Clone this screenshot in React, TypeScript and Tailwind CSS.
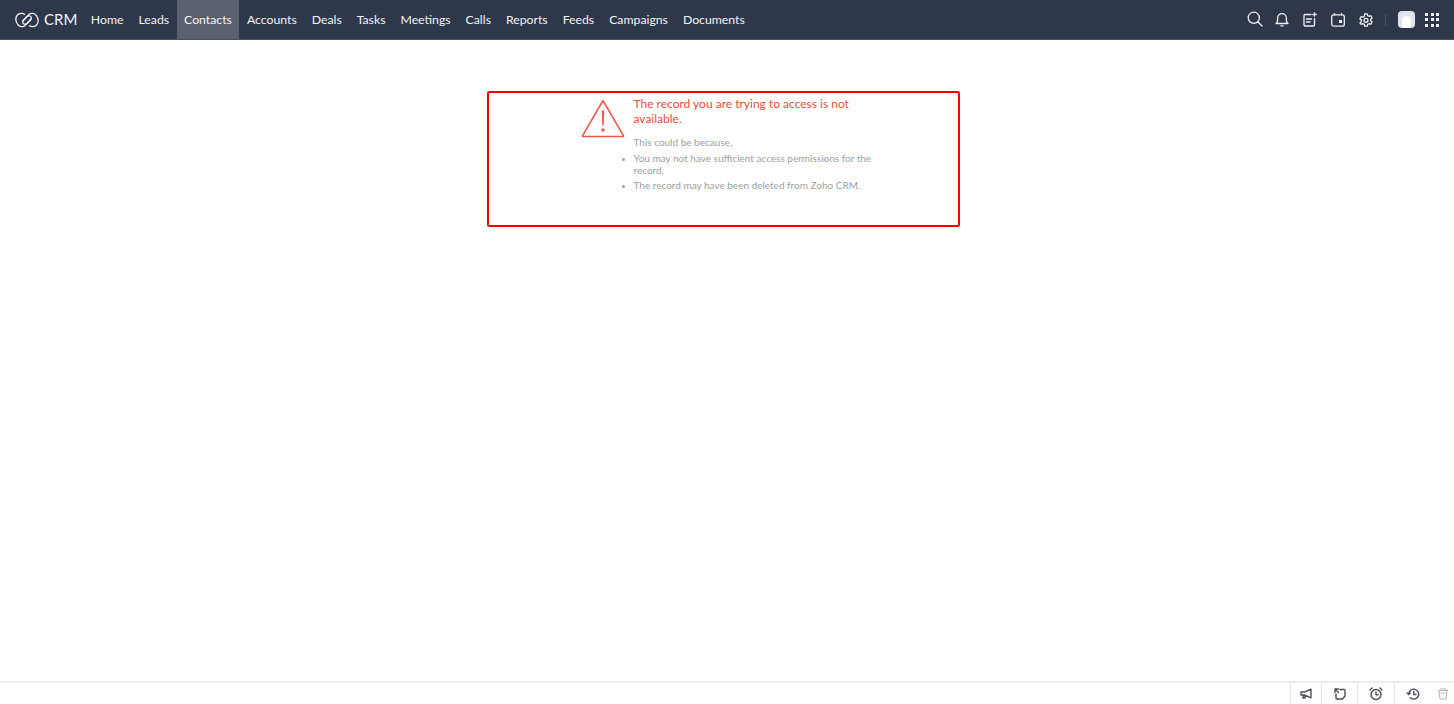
import React from "react";

const tabs = ["Home", "Leads", "Contacts", "Accounts", "Deals", "Tasks", "Meetings", "Calls", "Reports", "Feeds", "Campaigns", "Documents"];

function Logo() {
  return (
    <svg width="24" height="16" viewBox="0 0 24 16" fill="none" stroke="#f2f4f7" strokeWidth="1.3" strokeLinecap="round">
      <path d="M9.500 2.200 C7.600 .9 4.200 1 2.400 3 C.2 5.400 .4 9.600 2.600 12.400 C4.600 14.900 8 15.300 10.200 13.400 L15.600 7.800 C16.800 6.500 16.400 4.600 15 4 C13.800 3.400 12.600 4 11.800 4.800 L7.800 9" />
      <path d="M14.500 13.800 C16.400 15.100 19.800 15 21.600 13 C23.800 10.600 23.600 6.400 21.400 3.600 C19.400 1.100 16 .7 13.800 2.600 L8.400 8.200 C7.200 9.500 7.600 11.400 9 12 C10.200 12.600 11.400 12 12.200 11.200 L16.200 7" />
    </svg>
  );
}

const iconProps = {
  fill: "none",
  stroke: "#eef0f4",
  strokeWidth: 1.3,
  strokeLinecap: "round" as const,
  strokeLinejoin: "round" as const,
};

function TopIcons() {
  return (
    <div className="flex items-center">
      <svg width="16" height="16" viewBox="0 0 16 16" {...iconProps} className="mr-[12px] mb-[2px]">
        <circle cx="6.800" cy="6.800" r="5.600" />
        <path d="M11 11l4 4" />
      </svg>
      <svg width="14" height="15" viewBox="0 0 14 15" {...iconProps} className="mr-[14px]">
        <path d="M1 11.500c1-.8 1.600-1.400 1.600-3V6a4.400 4.400 0 0 1 8.800 0v2.500c0 1.600.6 2.200 1.600 3z" />
        <path d="M5.800 13.800h2.400" />
      </svg>
      <svg width="14" height="15" viewBox="0 0 14 15" {...iconProps} className="mr-[14px]">
        <path d="M8 2.500H2a1 1 0 0 0-1 1V13a1 1 0 0 0 1 1h8.500a1 1 0 0 0 1-1V6.500" />
        <path d="M3.500 7h5M3.500 10h3.500M11.500 .8v3.400M9.800 2.500h3.400" />
      </svg>
      <svg width="14" height="14" viewBox="0 0 14 14" {...iconProps} className="mr-[14px]">
        <rect x=".7" y="1.800" width="12.600" height="11.400" rx="2" />
        <path d="M3.500 .6v1.200M10.500 .6v1.200" />
        <rect x="8" y="7" width="3" height="3" fill="#eef0f4" stroke="none" />
      </svg>
      <svg width="14" height="14" viewBox="0 0 14 14" {...iconProps} className="mr-[12px]">
        <path d="M5.700 .8h2.600l.4 1.800 1.300.7 1.800-.6 1.300 2.300-1.400 1.200v1.600l1.400 1.200-1.300 2.300-1.800-.6-1.300.7-.4 1.800H5.700l-.4-1.800-1.300-.7-1.800.6L.9 9.900l1.400-1.200V7.100L.9 5.900l1.300-2.300 1.800.6 1.300-.7z" />
        <circle cx="7" cy="7.300" r="2" />
      </svg>
      <div className="h-[12px] w-px bg-[#4a5264] mr-[12px]" />
      <div className="w-[17px] h-[17px] rounded-[4px] bg-[#dfe4f0] flex items-end justify-center overflow-hidden mr-[10px]">
        <div className="w-[9px] h-[12px] rounded-t-full bg-white" />
      </div>
      <div className="grid grid-cols-3 gap-[2.500px]">
        {Array.from({ length: 9 }).map((_, i) => (
          <div key={i} className="w-[3px] h-[3px] bg-[#f2f4f7]" />
        ))}
      </div>
    </div>
  );
}

const b = { fill: "none", stroke: "#4b4f57", strokeWidth: 1.4, strokeLinecap: "round" as const, strokeLinejoin: "round" as const };

function BottomBar() {
  return (
    <div className="h-[23px] shrink-0 border-t-2 border-[#eeeeee] bg-white flex justify-end items-stretch">
      <div className="w-[31px] border-l border-[#e4e4e4] flex items-center justify-center">
        <svg width="13" height="12" viewBox="0 0 13 12" {...b}>
          <path d="M1 4h3.500L11 1.200v8.600L4.500 7H1zM3 7v3h2V7.500" />
        </svg>
      </div>
      <div className="w-[36px] border-l border-[#e4e4e4] flex items-center justify-center">
        <svg width="12" height="12" viewBox="0 0 12 12" {...b}>
          <path d="M1 1h3.500M1 1v3.500M1 1l3.500 3.500M6 1.500h4a1 1 0 0 1 1 1V8l-2.500 3H3a1 1 0 0 1-1-1V6" />
        </svg>
      </div>
      <div className="w-[37px] border-l border-[#e4e4e4] flex items-center justify-center">
        <svg width="14" height="14" viewBox="0 0 14 14" {...b}>
          <circle cx="7" cy="7.500" r="5" />
          <path d="M7 5v2.800h2.200M1 3l2-2M13 3l-2-2" />
        </svg>
      </div>
      <div className="w-[38px] border-l border-[#e4e4e4] flex items-center justify-center">
        <svg width="15" height="14" viewBox="0 0 15 14" {...b}>
          <path d="M2.700 7a5 5 0 1 1 1.500 3.700M1 6l1.700 1.400L4.300 6" />
          <path d="M7.700 4.500v3H10" />
        </svg>
      </div>
      <div className="w-[22px] flex items-center justify-center">
        <svg width="12" height="12" viewBox="0 0 12 12" fill="none" stroke="#b4b4b4" strokeWidth="1">
          <path d="M1 2.500h10M2 2.500l1 8.500h6l1-8.500M3 1h6l1 1.500M3.500 5h5" />
        </svg>
      </div>
    </div>
  );
}

export default function App() {
  return (
    <div className="h-screen flex flex-col bg-white overflow-hidden font-['Lato',sans-serif]">
      <header className="h-[40px] shrink-0 bg-[#2f374a] border-b border-[#4a5162] flex items-stretch justify-between pr-[15px]">
        <div className="flex items-stretch">
          <div className="flex items-center pl-[15px] pr-[6px]">
            <Logo />
            <span className="ml-[5px] text-[#f2f4f7] text-[15px] leading-none">CRM</span>
          </div>
          {tabs.map((t) => (
            <div
              key={t}
              className={`flex items-center px-[7.500px] pt-[1px] text-[12.250px] text-[#f2f4f7] ${t === "Contacts" ? "bg-[#5a606e]" : ""}`}
            >
              {t}
            </div>
          ))}
        </div>
        <TopIcons />
      </header>

      <main className="flex-1 flex justify-center items-start pt-[51px]">
        <div className="w-[473px] h-[136px] mr-[7px] border-2 border-[#ff0000] rounded-[2px] flex pl-[92px] pt-[3px]">
          <svg width="44" height="39" viewBox="0 0 44 39" fill="none" stroke="#ed5a4a" strokeWidth="1.600" strokeLinejoin="round" className="shrink-0 mt-[3px]">
            <path d="M22 1.500 L42.500 36.800 a.5.5 0 0 1-.4.700 H1.900 a.5.5 0 0 1-.4-.700 Z" />
            <path d="M20.800 11.500h2.400l-.4 15h-1.600z" fill="#ed5a4a" stroke="none" />
            <circle cx="22" cy="31" r="1.800" fill="#ed5a4a" stroke="none" />
          </svg>
          <div className="ml-[8.500px] w-[245px]">
            <h1 className="text-[#ee4a3c] text-[12px] leading-[15px]">
              The record you are trying to access is not available.
            </h1>
            <p className="mt-[10px] text-[10px] leading-[12px] text-[#a0a0a0]">This could be because,</p>
            <ul className="mt-[4px] text-[10px] leading-[12px] text-[#a0a0a0] list-disc marker:text-[8px]">
              <li>You may not have sufficient access permissions for the record.</li>
              <li className="mt-[2.500px]">The record may have been deleted from Zoho CRM.</li>
            </ul>
          </div>
        </div>
      </main>

      <BottomBar />
    </div>
  );
}
